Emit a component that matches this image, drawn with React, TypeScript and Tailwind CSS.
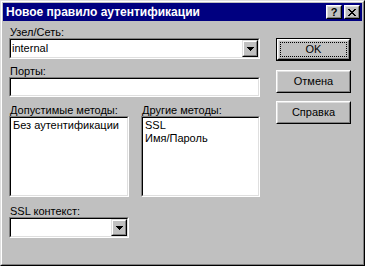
import React from 'react';

const Sunken: React.FC<{ className?: string; children?: React.ReactNode }> = ({ className = '', children }) => (
  <div className={`border border-t-[#808080] border-l-[#808080] border-b-white border-r-white ${className}`}>
    <div className="h-full border border-t-black border-l-black border-b-[#dfdfdf] border-r-[#dfdfdf] bg-white">
      {children}
    </div>
  </div>
);

const Label: React.FC<{ children: React.ReactNode }> = ({ children }) => (
  <div className="h-[12px] leading-[12px] pl-px whitespace-nowrap">{children}</div>
);

const DropArrow = () => (
  <svg width="7" height="4" viewBox="0 0 7 4" shapeRendering="crispEdges">
    <path d="M0 0h7v1h-1v1h-1v1h-1v1h-1v-1h-1v-1h-1v-1h-1z" fill="#000" />
  </svg>
);

const ComboBox: React.FC<{ value?: string; className?: string }> = ({ value, className = '' }) => (
  <Sunken className={`h-[21px] ${className}`}>
    <div className="flex h-full">
      <div className="flex-1 pl-px leading-[17px] whitespace-nowrap overflow-hidden">{value}</div>
      <div className="w-[16px] h-full border border-t-[#dfdfdf] border-l-[#dfdfdf] border-b-black border-r-black">
        <div className="h-full border border-t-white border-l-white border-b-[#808080] border-r-[#808080] bg-[#c0c0c0] flex items-center justify-center">
          <DropArrow />
        </div>
      </div>
    </div>
  </Sunken>
);

const CaptionButton: React.FC<{ className?: string; children: React.ReactNode }> = ({ className = '', children }) => (
  <div className={`w-[16px] h-[14px] border border-t-white border-l-white border-b-black border-r-black ${className}`}>
    <div className="h-full border border-t-[#dfdfdf] border-l-[#dfdfdf] border-b-[#808080] border-r-[#808080] bg-[#c0c0c0] flex items-center justify-center">
      {children}
    </div>
  </div>
);

const CloseGlyph = () => (
  <svg width="8" height="7" viewBox="0 0 8 7" shapeRendering="crispEdges">
    <path
      d="M0 0h2v1h-2zM6 0h2v1h-2zM1 1h2v1h-2zM5 1h2v1h-2zM2 2h4v1h-4zM3 3h2v1h-2zM2 4h4v1h-4zM1 5h2v1h-2zM5 5h2v1h-2zM0 6h2v1h-2zM6 6h2v1h-2z"
      fill="#000"
    />
  </svg>
);

const PushButton: React.FC<{ label: string; isDefault?: boolean; className?: string }> = ({ label, isDefault, className = '' }) =>
  isDefault ? (
    <div className={`w-[75px] h-[23px] border border-black ${className}`}>
      <div className="h-full border border-t-white border-l-white border-b-black border-r-black">
        <div className="h-full border border-t-[#dfdfdf] border-l-[#dfdfdf] border-b-[#808080] border-r-[#808080] bg-[#c0c0c0] p-px">
          <div className="h-full border border-dotted border-black flex items-center justify-center leading-[13px]">{label}</div>
        </div>
      </div>
    </div>
  ) : (
    <div className={`w-[75px] h-[23px] border border-t-white border-l-white border-b-black border-r-black ${className}`}>
      <div className="h-full border border-t-[#dfdfdf] border-l-[#dfdfdf] border-b-[#808080] border-r-[#808080] bg-[#c0c0c0] flex items-center justify-center leading-[13px]">
        {label}
      </div>
    </div>
  );

const ListBox: React.FC<{ items: string[] }> = ({ items }) => (
  <Sunken className="h-[81px]">
    <div className="pt-px pl-[2px]">
      {items.map((item) => (
        <div key={item} className="leading-[13px] whitespace-nowrap">{item}</div>
      ))}
    </div>
  </Sunken>
);

export default function App() {
  return (
    <div className="w-[365px] h-[266px] border border-t-[#dfdfdf] border-l-[#dfdfdf] border-b-black border-r-black font-['Liberation_Sans',Arial,sans-serif] text-[11px] text-black">
      <div className="h-full border border-t-white border-l-white border-b-[#808080] border-r-[#808080] bg-[#c0c0c0] p-px flex flex-col">
        {/* Title bar */}
        <div className="h-[18px] bg-[#000080] flex items-center pl-[3px] pr-[2px]">
          <span className="flex-1 text-white font-bold text-[12px] leading-[18px] whitespace-nowrap">
            Новое правило аутентификации
          </span>
          <CaptionButton>
            <span className="font-bold text-[11px] leading-[10px]">?</span>
          </CaptionButton>
          <CaptionButton className="ml-[2px]">
            <CloseGlyph />
          </CaptionButton>
        </div>

        {/* Body */}
        <div className="flex items-start pl-[6px] pt-[5px]">
          <div className="w-[251px] flex flex-col">
            <Label>Узел/Сеть:</Label>
            <ComboBox value="internal" />

            <div className="mt-[6px]">
              <Label>Порты:</Label>
            </div>
            <Sunken className="h-[20px]" />

            <div className="mt-[7px] flex gap-[12px]">
              <div className="w-[120px]">
                <Label>Допустимые методы:</Label>
                <ListBox items={['Без аутентификации']} />
              </div>
              <div className="w-[119px]">
                <Label>Другие методы:</Label>
                <ListBox items={['SSL', 'Имя/Пароль']} />
              </div>
            </div>

            <div className="mt-[8px]">
              <Label>SSL контекст:</Label>
            </div>
            <ComboBox className="w-[120px]" />
          </div>

          <div className="ml-[16px] mt-[12px] flex flex-col">
            <PushButton label="OK" isDefault />
            <PushButton label="Отмена" className="mt-[9px]" />
            <PushButton label="Справка" className="mt-[8px]" />
          </div>
        </div>
      </div>
    </div>
  );
}
